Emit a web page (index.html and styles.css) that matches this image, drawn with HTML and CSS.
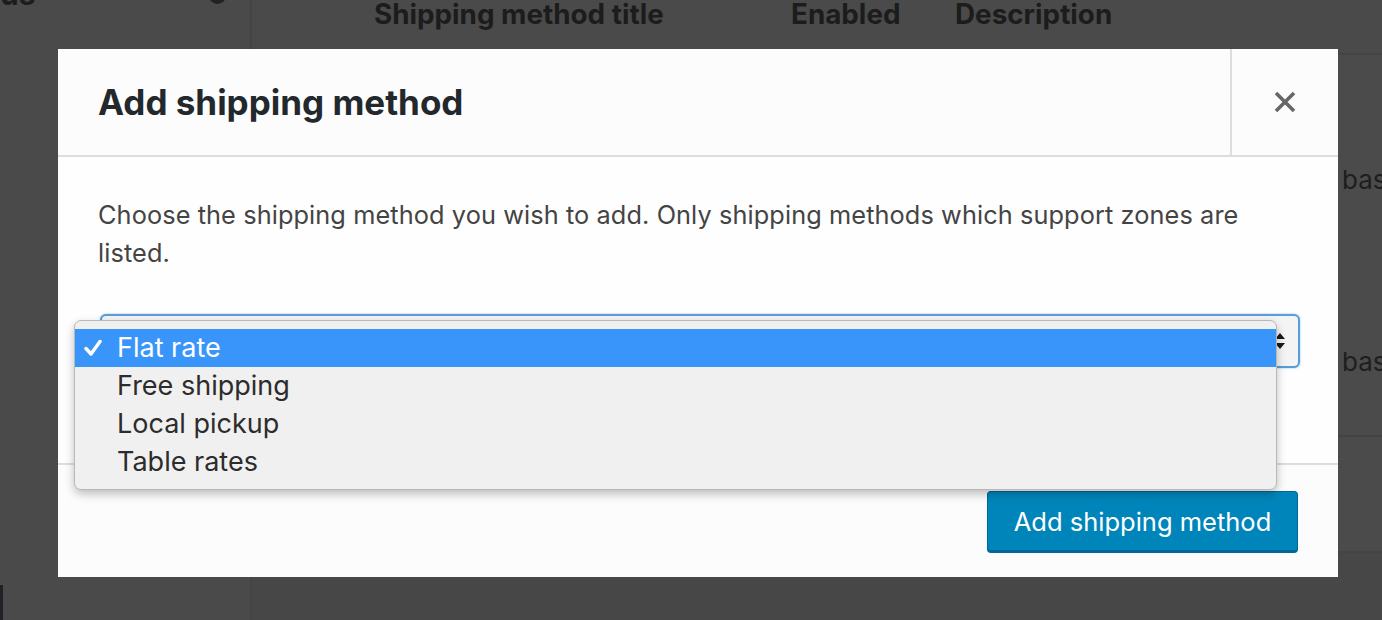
FILE: index.html
```html
<!DOCTYPE html>
<html lang="en">
<head>
<meta charset="utf-8">
<title>Add shipping method</title>
<link rel="stylesheet" href="styles.css">
</head>
<body>
<div class="page">
  <aside class="side">
    <div class="side-head"><span class="side-title">us</span><span class="side-icon"></span></div>
  </aside>
  <main class="main">
    <div class="thead">
      <span class="th th-title">Shipping method title</span>
      <span class="th th-enabled">Enabled</span>
      <span class="th th-desc">Description</span>
    </div>
    <div class="trow trow-a">
      <span class="cell-frag">bas</span>
      <span class="cell-frag">bas</span>
    </div>
    <div class="trow trow-b"></div>
    <div class="tfoot"></div>
  </main>
  <div class="edge-mark"></div>
</div>

<div class="modal" role="dialog" aria-labelledby="modal-title">
  <header class="modal-head">
    <h1 id="modal-title" class="modal-title">Add shipping method</h1>
    <button class="modal-close" aria-label="Close">
      <svg width="24" height="24" viewBox="0 0 24 24" aria-hidden="true"><path d="M3 3 L21 21 M21 3 L3 21" stroke="#666" stroke-width="3.6" stroke-linecap="butt" fill="none"/></svg>
    </button>
  </header>
  <section class="modal-body">
    <p class="intro">Choose the shipping method you wish to add. Only shipping methods which support zones are listed.</p>
    <div class="select-wrap">
      <div class="select">
        <span class="select-arrows">
          <svg width="12" height="22" viewBox="0 0 12 22" aria-hidden="true"><path d="M6 3 L11 9 L1 9 Z M1 13 L11 13 L6 19 Z" fill="#1a1a1a"/></svg>
        </span>
      </div>
      <ul class="popup">
        <li class="opt opt-sel"><svg class="check" width="18" height="18" viewBox="0 0 18 18" aria-hidden="true"><path d="M2 9.5 L7 15 L16 2.5" stroke="#fff" stroke-width="3.4" fill="none" stroke-linecap="round" stroke-linejoin="round"/></svg>Flat rate</li>
        <li class="opt">Free shipping</li>
        <li class="opt">Local pickup</li>
        <li class="opt">Table rates</li>
      </ul>
    </div>
  </section>
  <footer class="modal-foot">
    <button class="btn-primary">Add shipping method</button>
  </footer>
</div>
</body>
</html>
```
FILE: styles.css
```css
* { box-sizing: border-box; }
html, body { margin: 0; padding: 0; }
body {
  width: 1382px;
  height: 620px;
  overflow: hidden;
  background: #484848;
  font-family: Inter, "Noto Sans", sans-serif;
  position: relative;
}
.page {
  display: flex;
  height: 620px;
}
.side {
  width: 252px;
  flex: none;
  border-right: 2px solid #444;
  background: #4a4a4a;
}
.side-head {
  display: flex;
  justify-content: space-between;
  align-items: center;
  height: 12px;
  margin-top: -12px;
  padding-right: 24px;
}
.side-title {
  font-weight: 700;
  font-size: 30px;
  line-height: 1;
  color: #1d1d1d;
}
.side-icon {
  width: 17px;
  height: 17px;
  border-radius: 50%;
  background: #222;
  margin-top: 2px;
}
.main {
  flex: 1;
  display: flex;
  flex-direction: column;
  background: #4a4a4a;
}
.thead {
  height: 55px;
  display: flex;
  align-items: flex-start;
  border-bottom: 2px solid #444;
}
.th {
  font-weight: 700;
  font-size: 27.8px;
  line-height: 28px;
  color: #1c1c1c;
}
.th-title { margin-left: 122px; width: 417px; }
.th-enabled { width: 164px; }
.trow-a {
  height: 382px;
  display: flex;
  flex-direction: column;
  align-items: flex-start;
  padding-left: 1090px;
  padding-top: 110px;
  gap: 152px;
  border-bottom: 2px solid #444;
  background: #4b4b4b;
}
.cell-frag {
  font-size: 26px;
  line-height: 30px;
  color: #1e1e1e;
}
.trow-b {
  height: 116px;
  border-bottom: 2px solid #444;
  background: #4b4b4b;
}
.tfoot { flex: 1; background: #474747; }
.edge-mark {
  position: absolute;
  left: 0;
  top: 585px;
  width: 3px;
  height: 35px;
  background: #1e2226;
}

.modal {
  position: absolute;
  left: 58px;
  top: 49px;
  width: 1280px;
  height: 528px;
  background: #fcfcfc;
  display: flex;
  flex-direction: column;
}
.modal-head {
  height: 108px;
  flex: none;
  display: flex;
  align-items: stretch;
  border-bottom: 2px solid #dddddd;
  background: #fcfcfc;
}
.modal-title {
  flex: 1;
  margin: 0;
  padding-left: 40px;
  display: flex;
  align-items: center;
  font-size: 35px;
  font-weight: 700;
  color: #23282d;
}
.modal-close {
  width: 108px;
  border: 0;
  border-left: 2px solid #dddddd;
  background: #fcfcfc;
  display: flex;
  align-items: center;
  justify-content: center;
  padding: 0;
}
.modal-body {
  flex: 1;
  padding: 39px 38px 0 40px;
  background: #fefefe;
}
.intro {
  margin: 0;
  font-size: 25.3px;
  line-height: 38px;
  color: #444;
  letter-spacing: 0.1px;
}
.select-wrap {
  position: relative;
  margin-top: 42px;
  margin-left: 2px;
}
.select {
  height: 54px;
  border: 2px solid #5b9dd9;
  border-radius: 6px;
  background: #f4f4f4;
  box-shadow: 0 0 2px rgba(30,140,190,.6);
  display: flex;
  justify-content: flex-end;
  align-items: center;
  padding-right: 12px;
}
.select-arrows { display: flex; }
.popup {
  position: absolute;
  left: -26px;
  top: 6px;
  width: 1203px;
  margin: 0;
  padding: 8px 0 8px;
  list-style: none;
  background: #f0f0f0;
  border: 1px solid #b8b8b8;
  border-radius: 7px;
  box-shadow: 0 4px 10px rgba(0,0,0,.25);
}
.opt {
  height: 38px;
  line-height: 38px;
  padding-left: 42px;
  font-size: 27px;
  color: #2c2c2c;
  position: relative;
}
.opt-sel {
  background: #3a95fb;
  color: #fff;
}
.check {
  position: absolute;
  left: 9px;
  top: 10px;
}
.modal-foot {
  height: 114px;
  flex: none;
  border-top: 2px solid #dddddd;
  display: flex;
  justify-content: flex-end;
  align-items: flex-start;
  padding: 26px 40px 0 0;
  background: #fcfcfc;
}
.btn-primary {
  width: 311px;
  height: 62px;
  background: #0085ba;
  border: 1px solid #006799;
  border-bottom-width: 2px;
  border-radius: 4px;
  box-shadow: inset 0 -1px 0 #006799;
  color: #fff;
  font-family: Inter, "Noto Sans", sans-serif;
  font-size: 25.5px;
  padding: 0;
}
```
